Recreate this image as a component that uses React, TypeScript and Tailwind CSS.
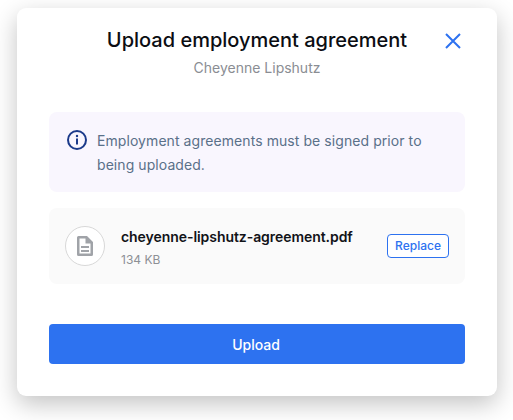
export default function App() {
  return (
    <div className="h-[420px] w-[513px] bg-white pl-[17px] pt-2 font-['Inter',sans-serif]">
      <div className="relative w-[480px] h-[388px] rounded-[9px] bg-white px-8 shadow-[0_8px_24px_rgba(0,0,0,0.24)]">
        {/* Header */}
        <div className="flex flex-col items-center pt-[17px]">
          <h1 className="text-[20px] leading-[30px] font-medium text-[#0b0d12]">Upload employment agreement</h1>
          <p className="mt-[3px] text-[14px] leading-5 text-[#8a8d93]">Cheyenne Lipshutz</p>
        </div>
        <button aria-label="Close" className="absolute left-[428px] top-[25px] text-[#2d72f0]">
          <svg width="16" height="16" viewBox="0 0 16 16" fill="none" stroke="currentColor" strokeWidth="2">
            <path d="M1 1l14 14M15 1L1 15" />
          </svg>
        </button>

        {/* Notice */}
        <div className="mt-[34px] flex h-20 gap-[10px] rounded-lg bg-[#f9f6fe] pl-[18px] pr-4 pt-[17px]">
          <svg className="mt-[1px] shrink-0" width="20" height="20" viewBox="0 0 20 20" fill="none">
            <circle cx="10" cy="10" r="9" stroke="#1b3a8a" strokeWidth="2" />
            <circle cx="10" cy="6" r="1.2" fill="#1b3a8a" />
            <rect x="9" y="8.5" width="2" height="6" fill="#1b3a8a" />
          </svg>
          <p className="text-[14px] leading-6 tracking-[0.07px] text-[#5a7089]">
            Employment agreements must be signed prior to being uploaded.
          </p>
        </div>

        {/* File */}
        <div className="mt-4 flex h-[76px] items-center rounded-lg bg-[#fafafa] pl-4 pr-4">
          <div className="flex h-10 w-10 shrink-0 items-center justify-center rounded-full border border-[#d8d8d8] bg-white">
            <svg width="16" height="20" viewBox="0 0 16 20" fill="none">
              <path
                fillRule="evenodd"
                d="M1.5 0H10l6 6v12.5a1.5 1.5 0 0 1-1.5 1.5h-13A1.5 1.5 0 0 1 0 18.5v-17A1.5 1.5 0 0 1 1.5 0zM2.5 2.5v15h11V7.5H8.500V2.500H2.500z"
                fill="#a0a3a8"
              />
              <rect x="4" y="10" width="8" height="2" fill="#a0a3a8" />
              <rect x="4" y="14" width="8" height="2" fill="#a0a3a8" />
            </svg>
          </div>
          <div className="ml-4 min-w-0 flex-1 pt-[2px]">
            <p className="text-[14px] leading-5 font-semibold tracking-[-0.06px] text-[#111318]">cheyenne-lipshutz-agreement.pdf</p>
            <p className="mt-[5px] text-[12px] leading-4 text-[#8d9095]">134 KB</p>
          </div>
          <button className="flex h-6 w-[62px] items-center justify-center rounded border border-[#2d72f0] bg-white text-[12px] font-medium text-[#2d72f0]">
            Replace
          </button>
        </div>

        {/* Action */}
        <button className="mt-10 h-10 w-full rounded bg-[#2d72f0] pr-[2px] text-[14px] font-medium text-white">Upload</button>
      </div>
    </div>
  )
}
